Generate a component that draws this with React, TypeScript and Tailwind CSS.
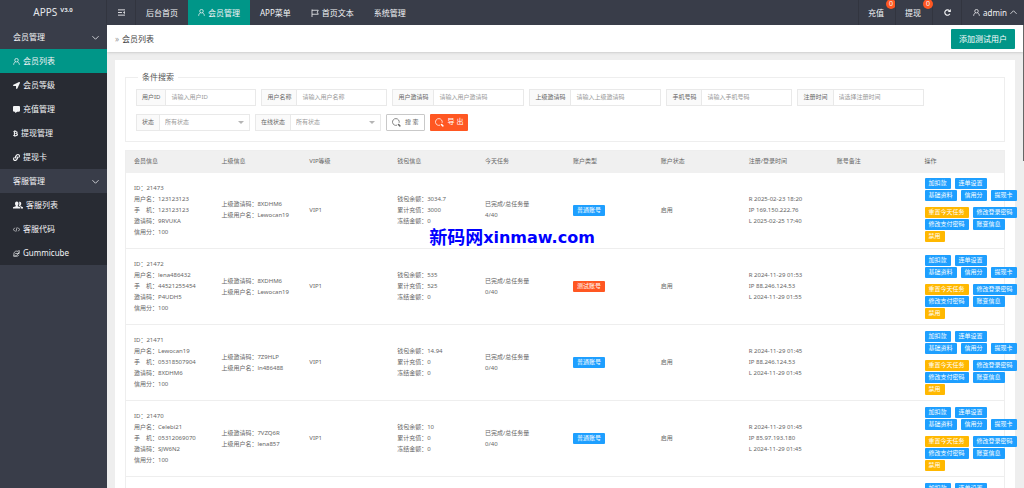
import React from 'react'
import { FaBtc, FaCommentAlt, FaLink, FaLocationArrow } from 'react-icons/fa'

const UserIcon = () => (
  <svg viewBox="0 0 16 16" className="size-[7px] shrink-0" fill="none" stroke="currentColor" strokeWidth="1.8">
    <circle cx="8" cy="5" r="4" />
    <path d="M1.5 15.5c.2-4 2-6 4.5-6.8M14.5 15.5c-.2-4-2-6-4.5-6.8" />
  </svg>
)

const FlagIcon = () => (
  <svg viewBox="0 0 16 16" className="size-2 shrink-0" fill="none" stroke="currentColor" strokeWidth="1.6">
    <path d="M2 1v15M2 2.5h12.5l-2 4 2 4H2" />
  </svg>
)

const MenuIcon = () => (
  <svg viewBox="0 0 16 16" className="size-[7px]" fill="none" stroke="currentColor" strokeWidth="2">
    <path d="M0 2h16M0 8h9M0 14h16" />
    <path d="M15.500 4.500v7L11.500 8z" fill="currentColor" stroke="none" />
  </svg>
)

const RefreshIcon = () => (
  <svg viewBox="0 0 16 16" className="size-[7px]" fill="none" stroke="currentColor" strokeWidth="2.6">
    <path d="M13.5 11A6.2 6.2 0 1 1 12.5 3.8" />
    <path d="M15.5 0v7h-7z" fill="currentColor" stroke="none" />
  </svg>
)

const SearchIcon = () => (
  <svg viewBox="0 0 16 16" className="size-[9px] shrink-0" fill="none" stroke="currentColor" strokeWidth="1.4">
    <path d="M9 12.7A6 6 0 1 1 12.7 8.5" />
    <path d="M11.5 11.5l2.5 2.5" strokeWidth="2.6" strokeLinecap="round" />
  </svg>
)

const GroupIcon = () => (
  <svg viewBox="0 0 20 16" className="h-2 w-[10px] shrink-0" fill="currentColor">
    <path d="M7.500 1C10 1 11 2.800 11 5s-.8 3.300-1.500 4v1.500l4.500 2V15H0v-2.500l5.500-2V9C4.500 8.300 4 7 4 5s1-4 3.500-4z" />
    <path d="M12 1.500c2.800-.8 4.500.8 4.500 3.500 0 1.800-.6 3-1.500 3.700v1.500l5 2.300V15h-4.700v-3.300L11.500 10c1.300-2.500 1.600-5.500.5-8.500z" />
  </svg>
)

const CodeIcon = () => (
  <svg viewBox="0 0 16 16" className="size-[7px] shrink-0" fill="none" stroke="currentColor" strokeWidth="1.500">
    <path d="M4 4L1 8l3 4M12 4l3 4-3 4M9.500 3l-3 10" />
  </svg>
)

const BrowserIcon = () => (
  <svg viewBox="0 0 16 16" className="size-[7px] shrink-0" fill="none" stroke="currentColor" strokeWidth="1.500">
    <path d="M13.500 11A6 6 0 1 1 14 8H5" />
    <path d="M11 2.500c2.500-1.500 4.500-1.500 4.500.5 0 3-6 9-11 11.500-3 1.500-4.500-.5-2.500-4" />
  </svg>
)

const Chevron = ({ up }: { up?: boolean }) => (
  <svg viewBox="0 0 16 16" className="size-[7px] shrink-0" fill="none" stroke="currentColor" strokeWidth="1.8">
    <path d={up ? 'M1 11l7-7 7 7' : 'M1 5l7 7 7-7'} />
  </svg>
)

const tabs = [
  { name: '后台首页' },
  { name: '会员管理', icon: <UserIcon />, active: true },
  { name: 'APP菜单' },
  { name: '首页文本', icon: <FlagIcon /> },
  { name: '系统管理' },
]

const menu = [
  {
    title: '会员管理',
    items: [
      { name: '会员列表', icon: <UserIcon />, active: true },
      { name: '会员等级', icon: <FaLocationArrow className="size-[7px]" /> },
      { name: '充值管理', icon: <FaCommentAlt className="size-[7px]" /> },
      { name: '提现管理', icon: <FaBtc className="h-[7px] w-[5px]" /> },
      { name: '提现卡', icon: <FaLink className="size-[7px]" /> },
    ],
  },
  {
    title: '客服管理',
    items: [
      { name: '客服列表', icon: <GroupIcon /> },
      { name: '客服代码', icon: <CodeIcon /> },
      { name: 'Gummicube', icon: <BrowserIcon /> },
    ],
  },
]

const fields = [
  { id: 'uid', label: '用户ID', hint: '请输入用户ID' },
  { id: 'name', label: '用户名称', hint: '请输入用户名称' },
  { id: 'code', label: '用户邀请码', hint: '请输入用户邀请码' },
  { id: 'parent', label: '上级邀请码', hint: '请输入上级邀请码' },
  { id: 'phone', label: '手机号码', hint: '请输入手机号码' },
  { id: 'time', label: '注册时间', hint: '请选择注册时间' },
]

const selects = [
  { id: 'status', label: '状态' },
  { id: 'online', label: '在线状态' },
]

const columns = ['会员信息', '上级信息', 'VIP等级', '钱包信息', '今天任务', '账户类型', '账户状态', '注册/登录时间', '账号备注', '操作']

const members = [
  { id: '21473', name: '123123123', phone: '123123123', code: '9RVUKA', pCode: '8XDHM6', pName: 'Lewocan19', money: '3034.7', total: '3000', task: '4/40', test: false, reg: '2025-02-23 18:20', ip: '169.150.222.76', login: '2025-02-25 17:40' },
  { id: '21472', name: 'lena486432', phone: '44521255454', code: 'P4UDH5', pCode: '8XDHM6', pName: 'Lewocan19', money: '535', total: '525', task: '0/40', test: true, reg: '2024-11-29 01:53', ip: '88.246.124.53', login: '2024-11-29 01:55' },
  { id: '21471', name: 'Lewocan19', phone: '05318507904', code: '8XDHM6', pCode: '7Z9HLP', pName: 'ln486488', money: '14.94', total: '0', task: '0/40', test: false, reg: '2024-11-29 01:45', ip: '88.246.124.53', login: '2024-11-29 01:45' },
  { id: '21470', name: 'Celebi21', phone: '05312069070', code: 'SJW6N2', pCode: '7VZQ6R', pName: 'lena857', money: '10', total: '0', task: '0/40', test: false, reg: '2024-11-29 01:45', ip: '85.97.193.180', login: '2024-11-29 01:45' },
  { id: '21469', name: 'lena857', phone: '05312069071', code: '7VZQ6R', pCode: '7Z9HLP', pName: 'ln486488', money: '10', total: '0', task: '0/40', test: false, reg: '2024-11-29 01:45', ip: '85.97.193.180', login: '2024-11-29 01:45' },
]

const actions = [
  [['加扣款', '连单设置'], ['基础资料', '信用分', '提现卡']],
  [['重置今天任务', '修改登录密码'], ['修改支付密码', '账变信息'], ['禁用']],
]

const yellow = ['重置今天任务', '禁用']

const Header = () => (
  <header className="flex h-[25px] shrink-0 bg-[#393d49] text-[8px] text-gray-100">
    <div className="flex w-[107px] shrink-0 items-center justify-center border-r border-[#32353f] text-[10px] text-gray-200">
      APPS <sup className="ml-[3px] text-[6px] font-bold">V3.0</sup>
    </div>
    <button aria-label="菜单" className="flex w-[29px] items-center justify-center border-r border-[#32353f]">
      <MenuIcon />
    </button>
    <nav className="flex">
      {tabs.map((tab) => (
        <a key={tab.name} href="#" className={`flex items-center gap-[3px] px-[10px] ${tab.active ? 'bg-[#009688]' : ''}`}>
          {tab.icon}
          {tab.name}
        </a>
      ))}
    </nav>
    <div className="ml-auto flex">
      {['充值', '提现'].map((name) => (
        <a key={name} href="#" className="relative flex w-[37px] items-center border-l border-[#32353f] px-[9px]">
          {name}
          <span className="absolute -top-px -right-px flex size-[10px] items-center justify-center rounded-full bg-[#ff5722] text-[7px]">0</span>
        </a>
      ))}
      <button aria-label="刷新" className="flex w-[29px] items-center justify-center border-l border-[#32353f]">
        <RefreshIcon />
      </button>
      <button className="flex items-center gap-[3px] border-l border-[#32353f] pr-[7px] pl-[11px]">
        <UserIcon />
        admin
        <Chevron up />
      </button>
    </div>
  </header>
)

const Sidebar = () => (
  <aside className="w-[107px] shrink-0 bg-[#393d49] text-[8px] text-gray-100">
    {menu.map((group) => (
      <div key={group.title}>
        <button className="flex h-6 w-full items-center justify-between pr-2 pl-[13px]">
          {group.title}
          <Chevron />
        </button>
        <ul className="bg-[#282b33]">
          {group.items.map((item) => (
            <li key={item.name}>
              <a href="#" className={`flex h-6 items-center gap-[3px] pl-[13px] ${item.active ? 'bg-[#009688]' : ''}`}>
                {item.icon}
                {item.name}
              </a>
            </li>
          ))}
        </ul>
      </div>
    ))}
  </aside>
)

const SearchForm = () => (
  <fieldset className="border border-[#eeeeee] px-[10px] pt-[5px] pb-[10px]">
    <legend className="ml-[2px] px-[4px] text-[8px] leading-[14px] text-[#555]">条件搜索</legend>
    <div className="flex flex-wrap gap-x-[5px] gap-y-2">
      {fields.map((f) => (
        <div key={f.id} className="flex h-[17px] border border-[#e9e9e9]">
          <label htmlFor={f.id} className="flex items-center border-r border-[#e9e9e9] bg-[#fafafa] px-[5px]">{f.label}</label>
          <input id={f.id} type="text" placeholder={f.hint} className="w-[89px] px-[5px] outline-none placeholder:text-[#999]" />
        </div>
      ))}
    </div>
    <div className="mt-2 flex flex-wrap gap-x-[5px] gap-y-2">
      {selects.map((s) => (
        <div key={s.id} className="relative flex h-[17px] border border-[#e9e9e9]">
          <label htmlFor={s.id} className="flex items-center border-r border-[#e9e9e9] bg-[#fafafa] px-[5px]">{s.label}</label>
          <select id={s.id} className="w-[89px] appearance-none px-[5px] text-[#999] outline-none">
            <option>所有状态</option>
          </select>
          <svg viewBox="0 0 6 3" className="pointer-events-none absolute top-[6px] right-[5px] h-[3px] w-[6px]" fill="#b5b5b5">
            <path d="M0 0h6L3 3z" />
          </svg>
        </div>
      ))}
      <button className="flex h-[17px] items-center gap-1 rounded-[1px] border border-[#c9c9c9] px-[5px]">
        <SearchIcon />
        搜 索
      </button>
      <button className="flex h-[17px] items-center gap-1 rounded-[1px] bg-[#ff5722] px-[5px] text-[7px] text-white">
        <SearchIcon />
        导 出
      </button>
    </div>
  </fieldset>
)

const MemberTable = () => (
  <table className="mt-2 w-full table-fixed border-collapse border border-[#eeeeee] text-left leading-[11px] whitespace-nowrap">
    <thead>
      <tr className="h-[22px] bg-[#f0f0f0]">
        {columns.map((c) => (
          <th key={c} className="pl-2 font-normal">{c}</th>
        ))}
      </tr>
    </thead>
    <tbody>
      {members.map((m) => (
        <tr key={m.id} className="h-[76px] border-b border-[#eeeeee]">
          <td className="pl-2">
            <p>ID：{m.id}</p>
            <p>用户名：{m.name}</p>
            <p>手　机：{m.phone}</p>
            <p>邀请码：{m.code}</p>
            <p>信用分：100</p>
          </td>
          <td className="pl-2">
            <p>上级邀请码：{m.pCode}</p>
            <p>上级用户名：{m.pName}</p>
          </td>
          <td className="pl-2">VIP1</td>
          <td className="pl-2">
            <p>钱包余额：{m.money}</p>
            <p>累计充值：{m.total}</p>
            <p>冻结金额：0</p>
          </td>
          <td className="pl-2">
            <p>已完成/总任务量</p>
            <p>{m.task}</p>
          </td>
          <td className="pl-2">
            <span className={`inline-block rounded-[1px] px-1 text-white ${m.test ? 'bg-[#ff5722]' : 'bg-[#1e9fff]'}`}>
              {m.test ? '测试账号' : '普通账号'}
            </span>
          </td>
          <td className="pl-2">启用</td>
          <td className="pl-2">
            <p>R {m.reg}</p>
            <p>IP {m.ip}</p>
            <p>L {m.login}</p>
          </td>
          <td></td>
          <td className="pl-2">
            <div className="flex flex-col gap-[6px]">
              {actions.map((block, i) => (
                <div key={i} className="flex flex-col gap-px">
                  {block.map((line, j) => (
                    <div key={j} className="flex gap-1">
                      {line.map((name) => (
                        <button key={name} className={`h-[11px] shrink-0 rounded-[1px] px-1 text-white ${yellow.includes(name) ? 'bg-[#ffb800]' : 'bg-[#1e9fff]'}`}>
                          {name}
                        </button>
                      ))}
                    </div>
                  ))}
                </div>
              ))}
            </div>
          </td>
        </tr>
      ))}
    </tbody>
  </table>
)

const App = () => {
  return (
    <div className="relative flex h-screen flex-col overflow-hidden bg-[#eeeeee] font-['Noto_Sans','Noto_Sans_CJK_SC',sans-serif] text-[6px] text-[#666]">
      <Header />
      <div className="flex min-h-0 flex-1">
        <Sidebar />
        <main className="min-w-0 flex-1 overflow-x-hidden overflow-y-auto [scrollbar-width:none]">
          <div className="flex h-[27px] items-center justify-between bg-white pr-[9px] pl-2 shadow-sm">
            <p className="flex items-center gap-[3px] text-[8px] text-[#444]">
              <span className="text-[#999]">»</span>
              会员列表
            </p>
            <button className="h-5 rounded-[1px] bg-[#009688] px-2 text-[8px] text-white">添加测试用户</button>
          </div>
          <div className="mt-2 mr-[9px] ml-2 bg-white p-[10px]">
            <SearchForm />
            <MemberTable />
          </div>
        </main>
      </div>
      <div className="absolute top-[25px] right-0 h-[136px] w-px bg-[#666]" />
      <div className="pointer-events-none absolute top-[224px] left-1/2 flex -translate-x-1/2 items-center font-['DejaVu_Sans','Noto_Sans_CJK_SC',sans-serif] text-base leading-7 font-bold whitespace-nowrap text-[#0000ff]">
        <span className="text-lg leading-7">新码网</span>
        xinmaw.com
      </div>
    </div>
  )
}

export default App
